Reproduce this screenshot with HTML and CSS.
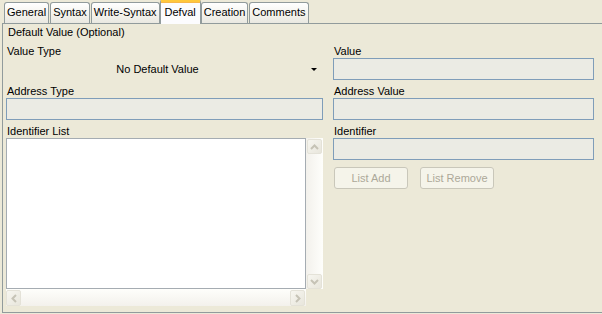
FILE: index.html
```html
<!DOCTYPE html>
<html lang="en">
<head>
  <meta charset="UTF-8" />
  <title>Defval</title>
  <link rel="stylesheet" href="styles.css">
</head>
<body>

  <div class="tabs">
    <div class="tab">General</div>
    <div class="tab">Syntax</div>
    <div class="tab">Write-Syntax</div>
    <div class="tab active">Defval</div>
    <div class="tab">Creation</div>
    <div class="tab">Comments</div>
  </div>

  <div class="panel">
    <div class="col left">
      <div class="heading">Default Value (Optional)</div>
      <div class="label">Value Type</div>
      <div class="combo">
        <span class="combo-text">No Default Value</span>
        <span class="combo-arrow"></span>
      </div>
      <div class="label">Address Type</div>
      <div class="field"></div>
      <div class="label">Identifier List</div>
      <div class="list-wrap">
        <div class="listbox"></div>
        <div class="vscroll">
          <div class="sbtn">
            <svg width="9" height="6" viewBox="0 0 9 6"><path d="M1 5 L4.5 1.5 L8 5" fill="none" stroke="#c6c3b6" stroke-width="2"/></svg>
          </div>
          <div class="sbtn">
            <svg width="9" height="6" viewBox="0 0 9 6"><path d="M1 1 L4.5 4.5 L8 1" fill="none" stroke="#c6c3b6" stroke-width="2"/></svg>
          </div>
        </div>
        <div class="hscroll">
          <div class="sbtn">
            <svg width="6" height="9" viewBox="0 0 6 9"><path d="M5 1 L1.5 4.5 L5 8" fill="none" stroke="#c6c3b6" stroke-width="2"/></svg>
          </div>
          <div class="sbtn">
            <svg width="6" height="9" viewBox="0 0 6 9"><path d="M1 1 L4.5 4.5 L1 8" fill="none" stroke="#c6c3b6" stroke-width="2"/></svg>
          </div>
        </div>
      </div>
    </div>

    <div class="col right">
      <div class="heading"></div>
      <div class="label">Value</div>
      <div class="field"></div>
      <div class="label">Address Value</div>
      <div class="field"></div>
      <div class="label">Identifier</div>
      <div class="field"></div>
      <div class="buttons">
        <button class="btn" disabled>List Add</button>
        <button class="btn" disabled>List Remove</button>
      </div>
    </div>
  </div>

</body>
</html>
```

FILE: styles.css
```css
body {
  margin: 0;
  background: #ece9d8;
  font-family: 'Liberation Sans', Arial, sans-serif;
  font-size: 11px;
  color: #000;
  width: 602px;
  height: 314px;
  overflow: hidden;
}

.tabs {
  display: flex;
  align-items: flex-end;
  height: 23px;
  padding-left: 4px;
  gap: 1px;
}

.tab {
  height: 20px;
  line-height: 19px;
  padding: 0 2px;
  border: 1px solid #919b9c;
  border-bottom: none;
  border-radius: 3px 3px 0 0;
  background: linear-gradient(#ffffff, #f3f2ec 60%, #e9e8e1);
}

.tab.active {
  position: relative;
  z-index: 1;
  height: 22px;
  margin: 0 -1px -1px;
  padding: 0 4px;
  line-height: 20px;
  background: #fcfcfe;
  border-top: 3px solid #ffc83c;
  box-shadow: inset 0 1px 0 #f7b74a;
  border-radius: 3px 3px 0 0;
}

.panel {
  margin-left: 2px;
  width: 596px;
  height: 288px;
  border: 1px solid #919b9c;
  display: flex;
  gap: 10px;
  padding-left: 3px;
}

.col {
  display: flex;
  flex-direction: column;
}

.left {
  width: 317px;
}

.right {
  width: 261px;
}

.heading {
  height: 16px;
  line-height: 17px;
  padding-left: 2px;
}

.label {
  height: 18px;
  line-height: 22px;
  padding-left: 1px;
}

.field {
  height: 20px;
  border: 1px solid #7f9db9;
  background: #ebebe4;
}

.combo {
  height: 22px;
  display: flex;
  align-items: center;
}

.combo-text {
  flex: 1;
  text-align: center;
  padding-right: 2px;
}

.combo-arrow {
  width: 0;
  height: 0;
  margin-right: 6px;
  border-left: 3px solid transparent;
  border-right: 3px solid transparent;
  border-top: 3px solid #000;
}

.list-wrap {
  display: grid;
  grid-template-columns: 300px 17px;
  grid-template-rows: 151px 17px;
}

.listbox {
  background: #fff;
  border: 1px solid #a5acb2;
}

.vscroll {
  background: linear-gradient(90deg, #f3f1ec, #fefefb);
  display: flex;
  flex-direction: column;
  justify-content: space-between;
  padding: 1px 1px 0 1px;
}

.hscroll {
  background: linear-gradient(#fefefb, #f3f1ec);
  display: flex;
  justify-content: space-between;
  padding: 1px 1px 1px 0;
}

.sbtn {
  width: 15px;
  height: 15px;
  box-sizing: border-box;
  border: 1px solid #e4e2d8;
  border-radius: 2px;
  background: linear-gradient(135deg, #f7f6f0, #e8e6dc);
  display: flex;
  align-items: center;
  justify-content: center;
}

.hscroll .sbtn {
  height: 16px;
}

.buttons {
  display: flex;
  gap: 12px;
  margin-top: 7px;
  padding-left: 1px;
}

.btn {
  width: 74px;
  height: 22px;
  font-family: inherit;
  font-size: 11px;
  color: #aca899;
  background: #f5f4ea;
  border: 1px solid #c9c7ba;
  border-radius: 3px;
  padding: 0;
}
```
